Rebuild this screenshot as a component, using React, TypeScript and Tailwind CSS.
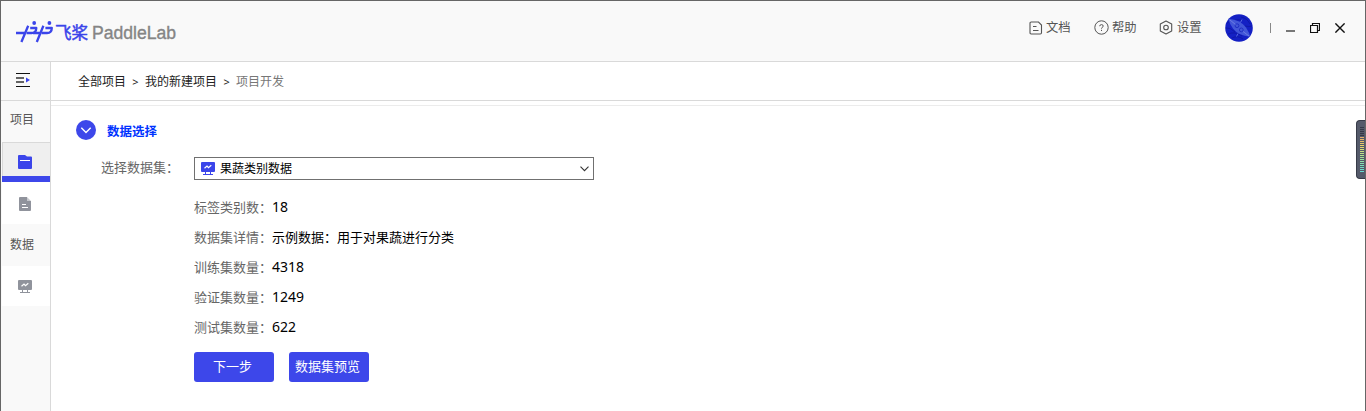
import React from "react";

const CJK = "font-['Noto_Sans','Noto_Sans_CJK_SC',sans-serif]";

function Logo() {
  return (
    <div className="flex h-[26px] items-center pl-[14px]">
      <svg width="40" height="26" viewBox="0 0 40 26" fill="none" stroke="#3b45ea" strokeWidth="2.3">
        <path d="M1 14H10.5M13.2 6.8L6.4 23" />
        <path d="M15.2 9H21.3Q21.2 14 16.6 14H11.5" strokeLinejoin="round" />
        <path d="M18 14H25.5M28.4 6.8L21.8 23" />
        <path d="M30.4 9H36.8Q36.7 14 32.1 14H26.5" strokeLinejoin="round" />
        <circle cx="19.2" cy="4" r="1.9" fill="#3b45ea" stroke="none" />
        <circle cx="34.4" cy="4" r="1.9" fill="#3b45ea" stroke="none" />
      </svg>
      <span className="mt-[2px] w-[37px] whitespace-nowrap text-[16.5px] leading-[24px] font-normal text-[#3b45ea] [-webkit-text-stroke:0.5px_#3b45ea]">
        飞桨
      </span>
      <span className="mt-[2px] font-['Liberation_Sans',sans-serif] text-[17.6px] leading-[24px] text-[#858585] [-webkit-text-stroke:0.35px_#858585]">
        PaddleLab
      </span>
    </div>
  );
}

function DocIcon() {
  return (
    <svg width="14" height="14" viewBox="0 0 14 14" fill="none" stroke="#555" strokeWidth="1.1">
      <path d="M2.2 1H9.5L12.5 4V11.8Q12.5 13 11.3 13H2.2Q1 13 1 11.8V2.2Q1 1 2.2 1ZM4 5.5H7.5M4 9.5H9.5" />
    </svg>
  );
}

function HelpIcon() {
  return (
    <svg width="15" height="15" viewBox="0 0 15 15" fill="none" stroke="#555" strokeWidth="1">
      <circle cx="7.5" cy="7.5" r="6.7" />
      <path d="M5.7 6.2Q5.8 4.6 7.5 4.6T9.2 6.1Q9.2 6.9 8.2 7.4Q7.5 7.8 7.5 8.7M7.5 9.8V11" />
    </svg>
  );
}

function SettingsIcon() {
  return (
    <svg width="14" height="15" viewBox="0 0 14 15" fill="none" stroke="#555" strokeWidth="1.1">
      <path d="M7 1L12.7 4.1V10.9L7 14L1.3 10.9V4.1Z" strokeLinejoin="round" />
      <circle cx="7" cy="7.5" r="2.3" />
    </svg>
  );
}

function Avatar() {
  return (
    <svg width="28" height="28" viewBox="0 0 28 28" fill="none">
      <circle cx="14" cy="14" r="13.8" fill="#1420c4" />
      <g stroke="#0d169d" strokeWidth=".7">
        <path d="M2 9Q8 5 17 6M1 14Q5 13 10 18M3 20Q10 17 17 22M16 3Q22 4 25 10M20 12Q24 13 27 12M7 24Q13 21 18 25" />
      </g>
      <path d="M3.3 4.7Q16 6 21 13.5Q24.5 19 25.2 22.7Q13 21.5 8 14.5Q4.5 9.5 3.3 4.7Z" fill="#4256d8" />
      <g stroke="#1c2bc0" strokeWidth=".9">
        <circle cx="12" cy="11.7" r="1.9" />
        <circle cx="16.3" cy="15.9" r="1.9" />
      </g>
      <path d="M5 6L10.5 10.5M18 17.5L24 22" stroke="#7e8ce6" strokeWidth=".7" />
      <path d="M17 5.5L15.5 8.5M13 19.5L11.5 22.5" stroke="#5366dd" />
    </svg>
  );
}

function Board({ color }: { color: string }) {
  return (
    <svg width="14" height="14" viewBox="0 0 14 14" fill="none">
      <rect width="14" height="10" rx="1" fill={color} />
      <path d="M3.5 6.3L6 4L7.5 5.7L10.3 3.3" stroke="#fff" strokeWidth="1.2" />
      <path d="M4.5 10V12M9.5 10V12M2 12.5H12" stroke={color} strokeWidth="1" />
    </svg>
  );
}

function Header() {
  return (
    <header className="flex h-[61px] shrink-0 justify-between border-b border-[#d9d9d9] bg-[#f9f9f9]">
      <div className="pt-[18px]"><Logo /></div>
      <div className="flex h-[53px] items-center pr-[20px] text-[12.3px] leading-[18px] text-[#555]">
        <DocIcon />
        <span className="ml-[3px] w-[48px]">文档</span>
        <HelpIcon />
        <span className="ml-[3px] w-[47px]">帮助</span>
        <SettingsIcon />
        <span className="ml-[4px] w-[48px]">设置</span>
        <Avatar />
        <span className="ml-[17px] h-[10px] w-px bg-[#888]" />
        <span className="mt-[6px] ml-[15px] h-[2px] w-[9px] bg-[#777]" />
        <svg className="ml-[15px]" width="10" height="10" viewBox="0 0 10 10" fill="none" stroke="#111" strokeWidth="1.2">
          <path d="M.5 2.5H7.5V9.5H.5ZM2.5 2.5V.5H9.5V7.5H7.5" />
        </svg>
        <svg className="ml-[15px]" width="10" height="10" viewBox="0 0 10 10" stroke="#111" strokeWidth="1.4">
          <path d="M.4 .4L9.6 9.6M9.6 .4L.4 9.6" />
        </svg>
      </div>
    </header>
  );
}

function Sidebar() {
  return (
    <aside className="flex w-[50px] shrink-0 flex-col border-r border-[#d9d9d9] bg-[#f9f9f9] text-[12px] leading-[18px] text-[#555]">
      <div className="flex h-[39px] shrink-0 border-b border-[#d9d9d9] pt-[11px] pl-[15px]">
        <svg width="15" height="14" viewBox="0 0 15 14">
          <path d="M0 .5H14M0 13.5H14" stroke="#111" strokeWidth="1" />
          <path d="M0 5H8M0 9H8" stroke="#333" strokeWidth="1.4" />
          <path d="M10 4.5L14 7L10 9.5Z" fill="#3b45ea" />
        </svg>
      </div>
      <div className="flex h-[41px] shrink-0 pt-[10px] pl-[9px]">项目</div>
      <div className="ml-px flex h-[34px] shrink-0 justify-center border-t border-l border-[#d9d9d9] bg-[#efefef] pt-[12px] pr-[3px]">
        <svg width="14" height="14" viewBox="0 0 14 14">
          <path d="M1 0H7L9 1.5H13Q14 1.5 14 2.5V13Q14 14 13 14H1Q0 14 0 13V1Q0 0 1 0Z" fill="#3b45ea" />
          <path d="M2 5.5H12" stroke="#fff" strokeWidth="1" />
        </svg>
      </div>
      <div className="ml-px h-[6px] shrink-0 bg-[#3d47ea]" />
      <div className="ml-px flex h-[42px] shrink-0 justify-center bg-white pt-[15px] pr-[2px]">
        <svg width="12" height="14" viewBox="0 0 12 14">
          <path d="M1 0H8V4H12V13Q12 14 11 14H1Q0 14 0 13V1Q0 0 1 0Z" fill="#90939c" />
          <path d="M8 0L12 4H8Z" fill="#c7c9ce" />
          <path d="M3 7.5H7M3 10.5H9" stroke="#fff" />
        </svg>
      </div>
      <div className="flex h-[42px] shrink-0 pt-[12px] pl-[9px]">数据</div>
      <div className="ml-px flex h-[40px] shrink-0 justify-center bg-white pt-[14px] pr-[2px]"><Board color="#90939c" /></div>
    </aside>
  );
}

function Detail({ label, value, digits = true }: { label: string; value: string; digits?: boolean }) {
  return (
    <div className="flex h-[30px] items-center">
      <span className="w-[78px] whitespace-nowrap text-[#666]">{label}：</span>
      <span className={digits ? "text-[14px] text-black" : "text-[13px] text-black"}>{value}</span>
    </div>
  );
}

function Content() {
  return (
    <main className="flex min-w-0 grow flex-col bg-white">
      <nav className="flex h-[39px] shrink-0 border-b border-[#d9d9d9] pt-[11px] pl-[27px] text-[12px] leading-[18px] text-[#222]">
        <span>全部项目</span>
        <span className="w-[19px] text-center text-[11px]">&gt;</span>
        <span>我的新建项目</span>
        <span className="w-[19px] text-center text-[11px]">&gt;</span>
        <span className="text-[#777]">项目开发</span>
      </nav>
      <div className="mt-[4px] h-px shrink-0 bg-[#ececec]" />
      <section className="flex flex-col text-[13px] leading-[20px]">
        <div className="mt-[14px] ml-[25px] flex h-[20px] items-center">
          <svg width="20" height="20" viewBox="0 0 20 20" fill="none">
            <circle cx="10" cy="10" r="10" fill="#3d47ea" />
            <path d="M5.3 7.8L10 12.4L14.7 7.8" stroke="#fff" strokeWidth="1.4" />
          </svg>
          <span className="mt-[3px] ml-[11px] text-[12.5px] font-bold text-[#0033ff]">数据选择</span>
        </div>
        <div className="mt-[17px] flex">
          <span className="ml-[50px] w-[93px] whitespace-nowrap text-[#666]">选择数据集：</span>
          <div className="flex h-[23px] w-[400px] items-center border border-[#707070] pr-[4px] pl-[6px] text-[12px] text-black">
            <Board color="#3b45ea" />
            <span className="ml-[5px] grow">果蔬类别数据</span>
            <svg width="9" height="6" viewBox="0 0 9 6" fill="none" stroke="#333" strokeWidth="1.1">
              <path d="M.5 .7L4.5 4.7L8.5 .7" />
            </svg>
          </div>
        </div>
        <div className="mt-[12px] ml-[143px] flex flex-col">
          <Detail label="标签类别数" value="18" />
          <Detail label="数据集详情" value="示例数据：用于对果蔬进行分类" digits={false} />
          <Detail label="训练集数量" value="4318" />
          <Detail label="验证集数量" value="1249" />
          <Detail label="测试集数量" value="622" />
        </div>
        <div className="mt-[10px] ml-[143px] flex gap-[15px] text-white">
          <button className="h-[30px] w-[80px] rounded-[3px] bg-[#3d47ea] pr-[3px] pb-[2px]">下一步</button>
          <button className="h-[30px] w-[80px] rounded-[3px] bg-[#3d47ea] pr-[3px] pb-[2px]">数据集预览</button>
        </div>
      </section>
    </main>
  );
}

const METER = [
  "bg-[#343846]", "bg-[#343846]", "bg-[#343846]", "bg-[#343846]", "bg-[#343846]",
  "bg-[#e5ad69]", "bg-[#e5b569]", "bg-[#e5bd69]", "bg-[#e5c869]", "bg-[#e5d16c]", "bg-[#e3d870]",
  "bg-[#d5dc78]", "bg-[#c8df80]", "bg-[#bde188]", "bg-[#b0e28e]", "bg-[#a5e396]", "bg-[#9ae39e]",
  "bg-[#90e2a8]", "bg-[#86e1b0]", "bg-[#7ce0b8]", "bg-[#74dfc2]", "bg-[#6edecb]", "bg-[#69dcd2]",
];

export default function App() {
  return (
    <div lang="zh-CN" className={`relative flex h-[411px] w-[1366px] flex-col overflow-hidden border-x border-t border-[#666] bg-white ${CJK}`}>
      <Header />
      <div className="flex min-h-0 grow">
        <Sidebar />
        <Content />
      </div>
      <div className="absolute top-[119px] right-0 flex h-[59px] w-[9px] flex-col gap-px rounded-l-[4px] border border-r-0 border-[#373b48] bg-[#555a6a] pt-[6px] pl-[3px]">
        {METER.map((color, i) => (
          <span key={i} className={`h-px w-[4px] shrink-0 ${color}`} />
        ))}
      </div>
    </div>
  );
}
